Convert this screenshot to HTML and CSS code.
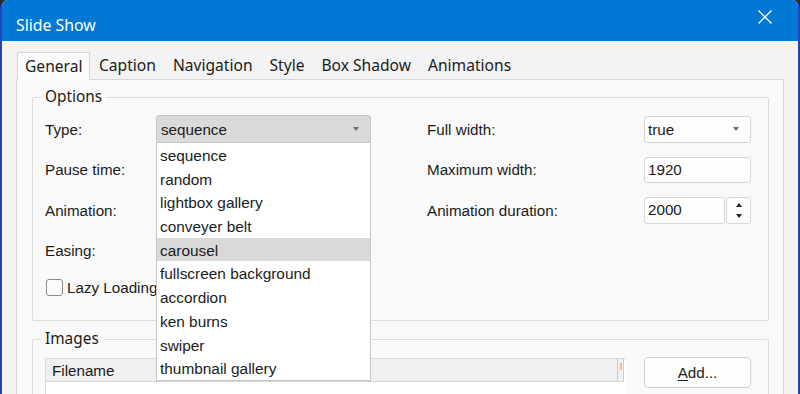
FILE: index.html
```html
<!DOCTYPE html>
<html>
<head>
<meta charset="utf-8">
<link rel="stylesheet" href="styles.css">
</head>
<body>
<div class="window">
  <div class="titlebar">
    <span class="title">Slide Show</span>
    <svg class="close" width="14" height="14" viewBox="0 0 14 14"><path d="M0.5 0.5 L13.5 13.5 M13.5 0.5 L0.5 13.5" stroke="#fff" stroke-width="1.3" fill="none"/></svg>
  </div>
  <div class="body">
    <div class="tabs">
      <div class="tab active">General</div>
      <div class="tab">Caption</div>
      <div class="tab">Navigation</div>
      <div class="tab">Style</div>
      <div class="tab">Box Shadow</div>
      <div class="tab">Animations</div>
    </div>
    <div class="panel">
      <fieldset class="group options">
        <legend>Options</legend>
        <div class="form">
          <div class="col col-left">
            <label class="lbl">Type:</label>
            <div class="combo open">
              <span>sequence</span><span class="arrow"></span>
              <ul class="dropdown">
                <li>sequence</li>
                <li>random</li>
                <li>lightbox gallery</li>
                <li>conveyer belt</li>
                <li class="hot">carousel</li>
                <li>fullscreen background</li>
                <li>accordion</li>
                <li>ken burns</li>
                <li>swiper</li>
                <li>thumbnail gallery</li>
              </ul>
            </div>
            <label class="lbl">Pause time:</label>
            <div class="field"></div>
            <label class="lbl">Animation:</label>
            <div class="field"></div>
            <label class="lbl">Easing:</label>
            <div class="field"></div>
          </div>
          <div class="col col-right">
            <label class="lbl">Full width:</label>
            <div class="combo"><span>true</span><span class="arrow"></span></div>
            <label class="lbl">Maximum width:</label>
            <div class="field">1920</div>
            <label class="lbl">Animation duration:</label>
            <div class="spin">
              <div class="field">2000</div>
              <div class="spinner"><span class="up"></span><span class="down"></span></div>
            </div>
          </div>
        </div>
        <label class="check"><span class="box"></span>Lazy Loading</label>
      </fieldset>
      <fieldset class="group images">
        <legend>Images</legend>
        <div class="images-row">
          <div class="table">
            <div class="thead">
              <span class="th">Filename</span>
              <span class="th-sep"></span>
              <span class="th-mark"></span>
            </div>
            <div class="tbody"></div>
          </div>
          <button class="btn"><u>A</u>dd...</button>
        </div>
      </fieldset>
    </div>
  </div>
</div>
</body>
</html>
```
FILE: styles.css
```css
* { box-sizing: border-box; }
html, body { margin: 0; padding: 0; }
body {
  width: 800px;
  height: 394px;
  overflow: hidden;
  background: #2b2b2b;
  font-family: "Liberation Sans", Arial, sans-serif;
  color: #1b1b1b;
}
.window {
  width: 800px;
  height: 394px;
  display: flex;
  flex-direction: column;
  background: #f3f3f3;
  border-left: 2px solid #1f45b0;
  border-right: 2px solid #1f45b0;
  border-radius: 8px 8px 0 0;
  overflow: hidden;
}
.titlebar {
  height: 41px;
  flex: none;
  background: #0078d4;
  display: flex;
  justify-content: space-between;
  align-items: flex-start;
  padding: 0 26px 0 14px;
}
.title {
  font-family: "Noto Sans", sans-serif;
  font-size: 15.8px;
  line-height: 22px;
  margin-top: 14px;
  color: #fff;
}
.close { margin-top: 10px; }
.body {
  flex: 1;
  display: flex;
  flex-direction: column;
  padding: 11px 14px 0 14px;
  min-height: 0;
}
.tabs {
  display: flex;
  height: 27px;
  padding-left: 1px;
  font-family: "Noto Sans", sans-serif;
  font-size: 15.6px;
  color: #1b1b1b;
  position: relative;
  z-index: 2;
}
.tab {
  padding: 0 8.5px;
  line-height: 26px;
  height: 27px;
}
.tab.active {
  background: #fbfbfb;
  border: 1px solid #d3d3d3;
  border-bottom: none;
  padding: 0 7px;
  height: 28px;
  margin-right: 0;
}
.panel {
  flex: 1;
  background: #f9f9f9;
  border: 1px solid #d6d6d6;
  border-bottom: none;
  padding: 7px 14px 0 15px;
  min-height: 0;
}
.group {
  margin: 0;
  border: 1px solid #dcdcdc;
  border-radius: 2px;
  padding: 8px 16px 24px 12px;
  min-width: 0;
}
.group legend {
  font-family: "Noto Sans", sans-serif;
  font-size: 15.4px;
  line-height: 20px;
  padding: 0 4px;
  margin-left: -4px;
  color: #1b1b1b;
}
.form {
  display: flex;
  gap: 56px;
}
.col {
  display: grid;
  grid-auto-rows: 28px;
  row-gap: 12.5px;
  align-items: center;
  font-size: 15.2px;
}
.col-left { grid-template-columns: 111px 215px; }
.col-right { grid-template-columns: 217px 107px; }
.lbl { white-space: nowrap; }
.combo {
  position: relative;
  height: 27px;
  border: 1px solid #d4d4d4;
  border-radius: 3px;
  background: #fdfdfd;
  display: flex;
  align-items: center;
  justify-content: space-between;
  padding: 0 11px 0 3px;
}
.combo.open {
  height: 28px;
  background: #dadada;
  border-color: #c6c6c6;
  padding-left: 4px;
}
.arrow {
  width: 0;
  height: 0;
  border-left: 3.5px solid transparent;
  border-right: 3.5px solid transparent;
  border-top: 4px solid #707070;
}
.dropdown {
  position: absolute;
  top: 100%;
  left: -1px;
  width: 215px;
  height: 239px;
  margin: 0;
  padding: 0;
  list-style: none;
  background: #fff;
  border: 1px solid #c6c6c6;
  z-index: 10;
  font-size: 15.4px;
}
.dropdown li {
  height: 23.7px;
  line-height: 25px;
  padding-left: 3px;
  white-space: nowrap;
}
.dropdown li.hot { background: #d9d9d9; }
.field {
  height: 26px;
  border: 1px solid #d8d8d8;
  border-radius: 3px;
  background: #fdfdfd;
  padding: 2px 0 0 3px;
  line-height: 20px;
}
.spin {
  display: flex;
  gap: 1px;
  height: 27px;
  align-items: stretch;
}
.spin .field { width: 81px; height: 27px; }
.spinner {
  width: 25px;
  border: 1px solid #d8d8d8;
  border-radius: 3px;
  background: #fdfdfd;
  display: flex;
  flex-direction: column;
  align-items: center;
  justify-content: center;
  gap: 7px;
}
.spinner .up {
  width: 0; height: 0;
  border-left: 3.5px solid transparent;
  border-right: 3.5px solid transparent;
  border-bottom: 4px solid #222;
}
.spinner .down {
  width: 0; height: 0;
  border-left: 3.5px solid transparent;
  border-right: 3.5px solid transparent;
  border-top: 4px solid #222;
}
.check {
  display: flex;
  align-items: center;
  gap: 4px;
  margin-top: 14.5px;
  margin-left: 1px;
  height: 17px;
  font-size: 15.2px;
}
.check .box {
  width: 17px;
  height: 17px;
  border: 1px solid #8a8a8a;
  border-radius: 3px;
  background: #fbfbfb;
}
.images { margin-top: 8px; padding-top: 9px; }
.images-row {
  display: flex;
  align-items: flex-start;
  gap: 18px;
}
.table {
  width: 581px;
  height: 60px;
  background: #fff;
  border: 1px solid #dadada;
  border-right: none;
}
.thead {
  height: 23px;
  background: #f0f0f0;
  border-bottom: 1px solid #d6d6d6;
  display: flex;
  align-items: center;
  position: relative;
  width: 578px;
  border-right: 1px solid #cfcfcf;
}
.th {
  font-size: 15.2px;
  padding-left: 6px;
  flex: 1;
}
.th-sep {
  width: 1px;
  height: 22px;
  background: #c8c8c8;
  margin-right: 2px;
}
.th-mark {
  width: 2px;
  height: 7px;
  background: #f6b98a;
  margin-right: 1px;
  align-self: flex-start;
  margin-top: 4px;
}
.btn {
  width: 107px;
  height: 31px;
  margin-top: -1px;
  border: 1px solid #d2d2d2;
  border-radius: 4px;
  background: #fdfdfd;
  font-family: "Liberation Sans", Arial, sans-serif;
  font-size: 15.2px;
  color: #1b1b1b;
  padding: 0;
}
.btn u { text-decoration-thickness: 1px; text-underline-offset: 2px; }
```
